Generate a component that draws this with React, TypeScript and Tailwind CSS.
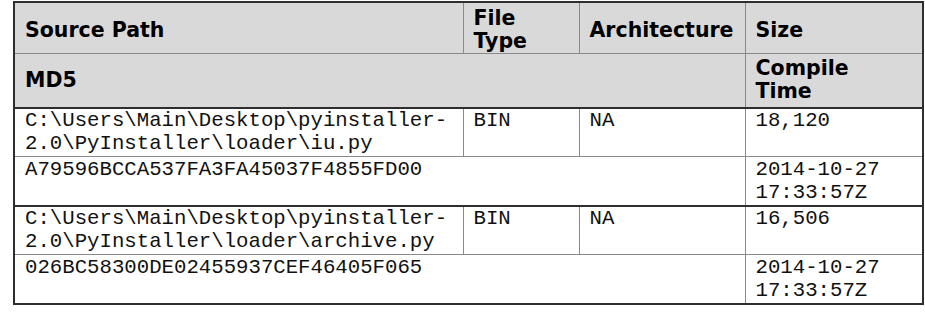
import React from 'react';

type Entry = {
  path: string[];
  fileType: string;
  arch: string;
  size: string;
  md5: string;
  compiled: string[];
  rowH: string;
  md5H: string;
};

const entries: Entry[] = [
  {
    path: ['C:\\Users\\Main\\Desktop\\pyinstaller-', '2.0\\PyInstaller\\loader\\iu.py'],
    fileType: 'BIN',
    arch: 'NA',
    size: '18,120',
    md5: 'A79596BCCA537FA3FA45037F4855FD00',
    compiled: ['2014-10-27', '17:33:57Z'],
    rowH: 'h-[47px]',
    md5H: 'h-[48px]',
  },
  {
    path: ['C:\\Users\\Main\\Desktop\\pyinstaller-', '2.0\\PyInstaller\\loader\\archive.py'],
    fileType: 'BIN',
    arch: 'NA',
    size: '16,506',
    md5: '026BC58300DE02455937CEF46405F065',
    compiled: ['2014-10-27', '17:33:57Z'],
    rowH: 'h-[48px]',
    md5H: 'h-[49px]',
  },
];

const th =
  'border border-[#8a8a8a] bg-[#d9d9d9] px-[10px] text-left align-middle text-[20.5px] leading-[23px] font-bold text-black';
const td =
  'border border-[#8a8a8a] px-[10px] pb-0 text-left align-top text-[20.7px] leading-[23.5px] text-[#111]';

const App = () => {
  return (
    <div className="min-h-screen bg-white pt-px">
      <table
        className="ml-[13px] w-[909px] table-fixed border-collapse border-2 border-[#2e2e2e]"
        style={{ fontFamily: '"DejaVu Sans", Verdana, sans-serif' }}
      >
        <colgroup>
          <col className="w-[449px]" />
          <col className="w-[116px]" />
          <col className="w-[166px]" />
          <col className="w-[178px]" />
        </colgroup>
        <thead>
          <tr className="h-[51px]">
            <th className={`${th} pt-[4px] pb-0`}>Source Path</th>
            <th className={`${th} pt-[4px] pb-0`}>
              File
              <br />
              Type
            </th>
            <th className={`${th} pt-[4px] pb-0`}>Architecture</th>
            <th className={`${th} pt-[4px] pb-0`}>Size</th>
          </tr>
          <tr className="h-[54px]">
            <th className={`${th} py-[2px]`} colSpan={3}>
              MD5
            </th>
            <th className={`${th} py-[2px]`}>
              Compile
              <br />
              Time
            </th>
          </tr>
        </thead>
        <tbody style={{ fontFamily: '"Liberation Mono", "Courier New", monospace' }}>
          {entries.map((e) => (
            <React.Fragment key={e.md5}>
              <tr className={`${e.rowH} border-t-2 border-t-[#2e2e2e]`}>
                <td className={`${td} pt-0`}>
                  {e.path[0]}
                  <br />
                  {e.path[1]}
                </td>
                <td className={`${td} pt-0`}>{e.fileType}</td>
                <td className={`${td} pt-0`}>{e.arch}</td>
                <td className={`${td} pt-0`}>{e.size}</td>
              </tr>
              <tr className={e.md5H}>
                <td className={`${td} pt-[1px]`} colSpan={3}>
                  {e.md5}
                </td>
                <td className={`${td} pt-[1px]`}>
                  {e.compiled[0]}
                  <br />
                  {e.compiled[1]}
                </td>
              </tr>
            </React.Fragment>
          ))}
        </tbody>
      </table>
    </div>
  );
};

export default App;
